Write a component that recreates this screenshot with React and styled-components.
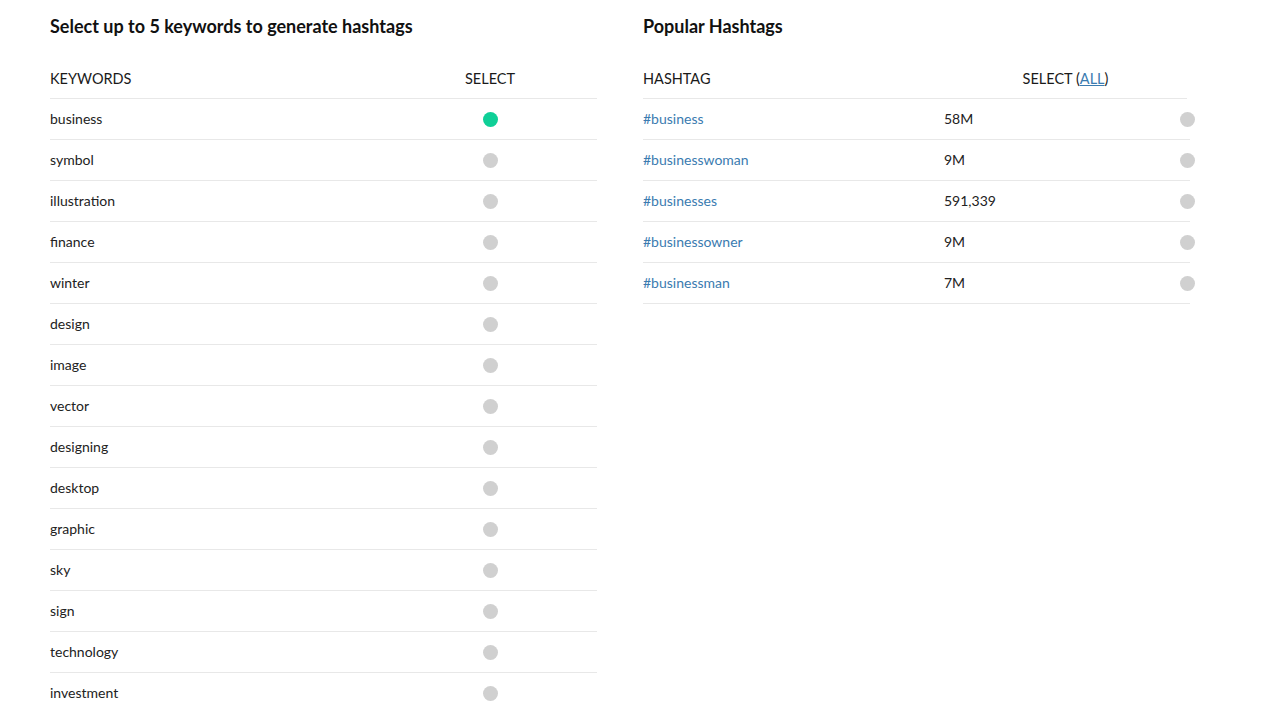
import React, { useState } from "react";
import styled, { createGlobalStyle } from "styled-components";

const GlobalStyle = createGlobalStyle`
  body {
    margin: 0;
    background: #ffffff;
    font-family: "Lato", "Liberation Sans", sans-serif;
    color: #222222;
  }
`;

const keywords = [
  "business",
  "symbol",
  "illustration",
  "finance",
  "winter",
  "design",
  "image",
  "vector",
  "designing",
  "desktop",
  "graphic",
  "sky",
  "sign",
  "technology",
  "investment",
];

const hashtags = [
  { tag: "#business", count: "58M" },
  { tag: "#businesswoman", count: "9M" },
  { tag: "#businesses", count: "591,339" },
  { tag: "#businessowner", count: "9M" },
  { tag: "#businessman", count: "7M" },
];

function App() {
  const [selected, setSelected] = useState(["business"]);
  const [picked, setPicked] = useState([]);

  const toggleKeyword = (k) => {
    setSelected((s) =>
      s.includes(k) ? s.filter((x) => x !== k) : s.length < 5 ? [...s, k] : s
    );
  };
  const toggleTag = (t) => {
    setPicked((p) => (p.includes(t) ? p.filter((x) => x !== t) : [...p, t]));
  };

  return (
    <Page>
      <GlobalStyle />
      <Column>
        <Title>Select up to 5 keywords to generate hashtags</Title>
        <KeywordHead>
          <span>KEYWORDS</span>
          <HeadCenter>SELECT</HeadCenter>
        </KeywordHead>
        {keywords.map((k) => (
          <KeywordRow key={k}>
            <Cell>{k}</Cell>
            <DotCell>
              <Dot $on={selected.includes(k)} onClick={() => toggleKeyword(k)} />
            </DotCell>
          </KeywordRow>
        ))}
      </Column>
      <Column>
        <Title>Popular Hashtags</Title>
        <TagHead>
          <span>HASHTAG</span>
          <HeadCenter>
            SELECT (<AllLink href="#">ALL</AllLink>)
          </HeadCenter>
        </TagHead>
        {hashtags.map((h) => (
          <TagRow key={h.tag}>
            <Tag>{h.tag}</Tag>
            <Cell>{h.count}</Cell>
            <EdgeDot $on={picked.includes(h.tag)} onClick={() => toggleTag(h.tag)} />
          </TagRow>
        ))}
      </Column>
    </Page>
  );
}

export default App;

const Page = styled.div`
  display: flex;
  gap: 46px;
  padding: 0 50px;
`;

const Column = styled.div`
  width: 547px;
  display: flex;
  flex-direction: column;
`;

const Title = styled.h2`
  margin: 0;
  padding-top: 14px;
  height: 52px;
  box-sizing: border-box;
  font-size: 18px;
  font-weight: 700;
  line-height: 24px;
  color: #111111;
`;

const HeadBase = styled.div`
  display: grid;
  height: 47px;
  box-sizing: border-box;
  padding-top: 16px;
  font-size: 14.5px;
  line-height: 22px;
  color: #1a1a1a;
  border-bottom: 1px solid #e8e8e8;
`;

const KeywordHead = styled(HeadBase)`
  grid-template-columns: 1fr 214px;
`;

const TagHead = styled(HeadBase)`
  grid-template-columns: 301px 243px;
  margin-right: 3px;
`;

const HeadCenter = styled.div`
  text-align: center;
`;

const RowBase = styled.div`
  display: grid;
  height: 41px;
  box-sizing: border-box;
  align-items: center;
  font-size: 14px;
  color: #222222;
  border-bottom: 1px solid #e8e8e8;
`;

const KeywordRow = styled(RowBase)`
  grid-template-columns: 1fr 214px;
`;

const TagRow = styled(RowBase)`
  grid-template-columns: 301px 1fr 15px;
`;

const Cell = styled.span`
  margin-top: -2px;
`;

const Tag = styled(Cell)`
  color: #3a7bb0;
`;

const DotCell = styled.div`
  display: flex;
  justify-content: center;
`;

const AllLink = styled.a`
  color: #3a7bb0;
  text-decoration: underline;
`;

const Dot = styled.span`
  display: block;
  width: 15px;
  height: 15px;
  border-radius: 50%;
  cursor: pointer;
  background: ${(p) => (p.$on ? "#0fcf97" : "#d0d0d0")};
`;

const EdgeDot = styled(Dot)`
  justify-self: end;
  margin-right: -5px;
`;
